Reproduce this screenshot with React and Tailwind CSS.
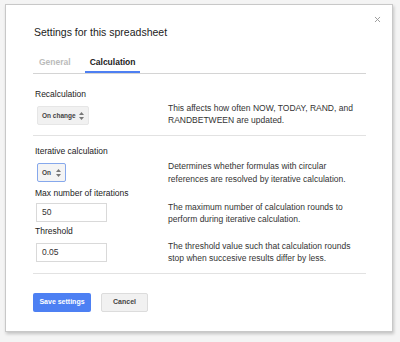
import { X } from 'lucide-react'

function App() {
  return (
    <div className="w-[400px] h-[342px] bg-[#f4f4f4] pl-[5px] pt-[4px] font-['Liberation_Sans',Arial,sans-serif] text-[#222]">
      <div className="w-[388px] h-[328px] bg-white border border-[#c8c8c8] shadow-[1px_2px_3px_rgba(0,0,0,0.2)] relative pl-[27px] pr-[26px] pt-[20px]">
        <X className="absolute right-[10px] top-[10px] w-[9px] h-[9px] text-[#999]" strokeWidth={2.5} />
        <h1 className="text-[10.5px] leading-[14px] pl-[1px] text-[#222]">Settings for this spreadsheet</h1>

        <div className="mt-[18px] flex border-b border-[#d4d4d4] text-[8.5px] leading-[10px] font-bold">
          <span className="px-[6px] pb-[6px] text-[#bbb]">General</span>
          <span className="ml-[8px] px-[5px] pb-[4px] border-b-2 border-[#4d7ff2] text-[#222]">Calculation</span>
        </div>

        <div className="pt-[15px] border-b border-[#e2e2e2] pb-[10px]">
          <p className="text-[8.5px] leading-[11px] pl-[2px]">Recalculation</p>
          <Row control={<SelectBox label="On change" width="w-[52px]" />} offset="mt-[-4px]" leading="leading-[12px]">
            This affects how often NOW, TODAY, RAND, and<br />RANDBETWEEN are updated.
          </Row>
        </div>

        <div className="pt-[10px] border-b border-[#e2e2e2] pb-[11px]">
          <p className="text-[8.5px] leading-[11px] pl-[2px]">Iterative calculation</p>
          <Row control={<SelectBox label="On" width="w-[29px]" active />} offset="mt-[-3px]" leading="leading-[13px]">
            Determines whether formulas with circular<br />references are resolved by iterative calculation.
          </Row>

          <p className="text-[8.5px] leading-[11px] pl-[2px] mt-[6px]">Max number of iterations</p>
          <Row control={<InputBox value="50" />} offset="mt-[-2px]" leading="leading-[12px]" tight>
            The maximum number of calculation rounds to<br />perform during iterative calculation.
          </Row>

          <p className="text-[8.5px] leading-[11px] pl-[2px] mt-[4px]">Threshold</p>
          <Row control={<InputBox value="0.05" />} offset="mt-[-3px]" leading="leading-[12px]">
            The threshold value such that calculation rounds<br />stop when succesive results differ by less.
          </Row>
        </div>

        <div className="mt-[19px] flex gap-[10px] text-[7px] font-bold">
          <button className="w-[58px] h-[19px] rounded-[2px] bg-[#4d80f3] text-white">Save settings</button>
          <button className="w-[47px] h-[19px] rounded-[2px] bg-[#f1f1f1] border border-[#dcdcdc] text-[#444]">Cancel</button>
        </div>
      </div>
    </div>
  )
}

function Row({ control, offset, leading, tight, children }) {
  return (
    <div className={`flex h-[19px] ${tight ? 'mt-[4px]' : 'mt-[6px]'}`}>
      <div className="w-[135px] shrink-0 pl-[3px]">{control}</div>
      <p className={`text-[8.5px] text-[#333] ${leading} ${offset}`}>{children}</p>
    </div>
  )
}

function SelectBox({ label, width, active }) {
  return (
    <div
      className={`${width} ml-[1px] h-[19px] rounded-[2px] flex items-center justify-between pl-[4px] pr-[4px] text-[6.5px] font-bold text-[#444] whitespace-nowrap ${
        active ? 'border border-[#86a8ec] bg-[#f4f4f4]' : 'border border-[#e6e6e6] bg-[#f1f1f1]'
      }`}
    >
      <span>{label}</span>
      <svg width="5" height="8" viewBox="0 0 5 8" className="fill-[#777]">
        <path d="M2.5 0 L5 3 L0 3 Z" />
        <path d="M0 5 L5 5 L2.5 8 Z" />
      </svg>
    </div>
  )
}

function InputBox({ value }) {
  return (
    <div className="w-[71px] h-[19px] border border-[#d9d9d9] bg-white flex items-center px-[5px] text-[8.5px] text-[#333]">
      {value}
    </div>
  )
}

export default App
